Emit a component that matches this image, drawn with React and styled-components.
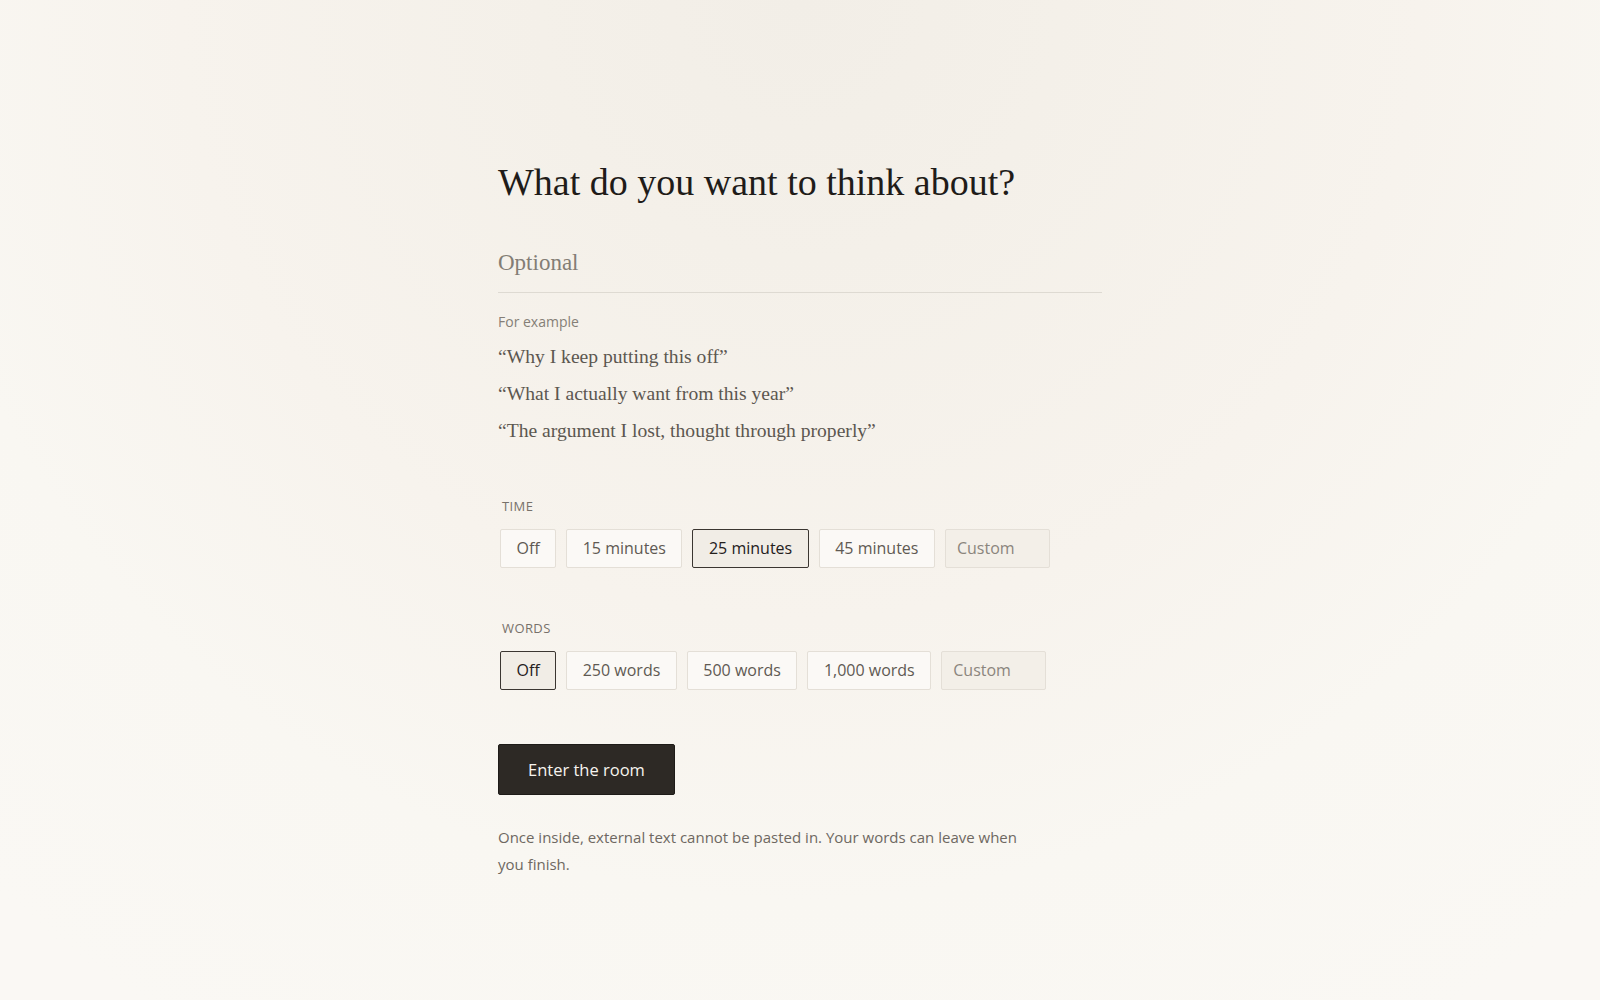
import React, { useState } from 'react';
import styled, { createGlobalStyle } from 'styled-components';

const GlobalStyle = createGlobalStyle`
  html, body {
    margin: 0;
    padding: 0;
  }
  body {
    min-height: 1000px;
    background: #f9f6f1;
    font-family: "Open Sans", "Noto Sans", sans-serif;
  }
`;

const Page = styled.div`
  min-height: 1000px;
  background: radial-gradient(
    circle at 50% 0%,
    #f2eee7 0px,
    #f4f0e9 260px,
    #f7f3ed 620px,
    #f9f7f2 900px,
    #faf8f4 1200px
  );
  display: flex;
  justify-content: center;
`;

const Column = styled.main`
  width: 604px;
  padding-top: 160px;
  display: flex;
  flex-direction: column;
`;

const Heading = styled.h1`
  margin: 0;
  font-family: "Liberation Serif", "Times New Roman", serif;
  font-weight: 400;
  font-size: 38px;
  line-height: 1.2;
  color: #1f1c19;
`;

const TopicInput = styled.input`
  margin-top: 36px;
  padding: 8px 0 16px;
  border: none;
  border-bottom: 1px solid #dedad2;
  background: transparent;
  font-family: "Liberation Serif", "Times New Roman", serif;
  font-size: 23px;
  line-height: 26px;
  color: #1f1c19;
  outline: none;

  &::placeholder {
    color: #837d75;
  }
`;

const ExampleLabel = styled.div`
  margin-top: 19px;
  font-size: 14px;
  line-height: 20px;
  color: #857f77;
`;

const ExampleList = styled.ul`
  margin: 6px 0 0;
  padding: 0;
  list-style: none;
`;

const Example = styled.li`
  font-family: "Liberation Serif", "Times New Roman", serif;
  font-size: 19.6px;
  line-height: 37px;
  color: #5c5750;
`;

const Group = styled.section`
  margin-top: ${p => p.$gap}px;
  padding-left: 2px;
`;

const GroupLabel = styled.div`
  padding-left: 2px;
  font-size: 13px;
  line-height: 18px;
  letter-spacing: 0.03em;
  text-transform: uppercase;
  color: #77716a;
`;

const Options = styled.div`
  margin-top: 14px;
  display: flex;
  gap: 10px;
`;

const Option = styled.button`
  height: 39px;
  padding: 0 15.5px;
  border: 1px solid ${p => (p.$active ? '#3b3631' : '#e4dfd7')};
  border-radius: 2px;
  background: ${p => (p.$active ? '#f1ede6' : '#fbf9f6')};
  font-family: "Open Sans", "Noto Sans", sans-serif;
  font-size: 16px;
  color: ${p => (p.$active ? '#24201c' : '#5f5a53')};
  cursor: pointer;
`;

const CustomField = styled.input`
  width: 105px;
  height: 39px;
  box-sizing: border-box;
  padding: 0 11px;
  border: 1px solid #e4dfd7;
  border-radius: 2px;
  background: #f3efe8;
  font-family: "Open Sans", "Noto Sans", sans-serif;
  font-size: 16px;
  color: #24201c;
  outline: none;

  &::placeholder {
    color: #8b857d;
  }
`;

const EnterButton = styled.button`
  align-self: flex-start;
  margin-top: 54px;
  height: 51px;
  padding: 0 29px;
  border: 1px solid #1e1b18;
  border-radius: 2px;
  background: #2d2925;
  font-family: "Open Sans", "Noto Sans", sans-serif;
  font-size: 16.5px;
  color: #f7f4ef;
  cursor: pointer;
`;

const Note = styled.p`
  margin: 29px 0 0;
  max-width: 520px;
  font-size: 15px;
  line-height: 27px;
  color: #6e6861;
`;

const TIMES = ['Off', '15 minutes', '25 minutes', '45 minutes'];
const WORDS = ['Off', '250 words', '500 words', '1,000 words'];

const OptionGroup = ({ label, options, value, onChange, gap }) => (
  <Group $gap={gap}>
    <GroupLabel>{label}</GroupLabel>
    <Options>
      {options.map(o => (
        <Option key={o} $active={o === value} onClick={() => onChange(o)}>
          {o}
        </Option>
      ))}
      <CustomField placeholder="Custom" />
    </Options>
  </Group>
);

export default function App() {
  const [time, setTime] = useState('25 minutes');
  const [words, setWords] = useState('Off');

  return (
    <Page>
      <GlobalStyle />
      <Column>
        <Heading>What do you want to think about?</Heading>
        <TopicInput placeholder="Optional" />
        <ExampleLabel>For example</ExampleLabel>
        <ExampleList>
          <Example>“Why I keep putting this off”</Example>
          <Example>“What I actually want from this year”</Example>
          <Example>“The argument I lost, thought through properly”</Example>
        </ExampleList>
        <OptionGroup label="Time" options={TIMES} value={time} onChange={setTime} gap={48} />
        <OptionGroup label="Words" options={WORDS} value={words} onChange={setWords} gap={51} />
        <EnterButton>Enter the room</EnterButton>
        <Note>
          Once inside, external text cannot be pasted in. Your words can leave when you finish.
        </Note>
      </Column>
    </Page>
  );
}
